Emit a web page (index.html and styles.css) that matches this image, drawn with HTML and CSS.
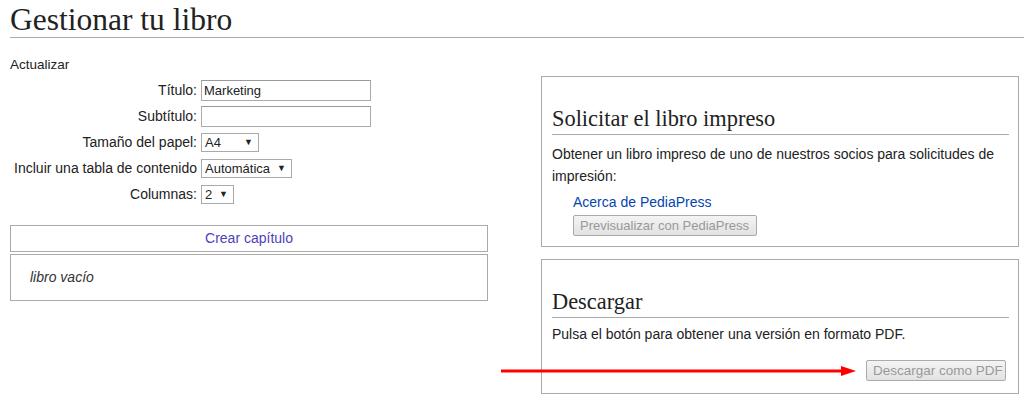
FILE: index.html
```html
<!DOCTYPE html>
<html lang="es">
<head>
<meta charset="utf-8">
<title>Gestionar tu libro</title>
<link rel="stylesheet" href="styles.css">
</head>
<body>
<div class="page">
  <h1 class="title">Gestionar tu libro</h1>
  <div class="cols">
    <div class="left">
      <div class="update">Actualizar</div>
      <table class="form">
        <tr><td class="lbl">Título:</td><td><input class="txt" type="text" value="Marketing"></td></tr>
        <tr><td class="lbl">Subtítulo:</td><td><input class="txt" type="text" value=""></td></tr>
        <tr><td class="lbl">Tamaño del papel:</td><td><span class="sel sel-a4">A4<span class="tri">▼</span></span></td></tr>
        <tr><td class="lbl">Incluir una tabla de contenido</td><td><span class="sel sel-auto">Automática<span class="tri">▼</span></span></td></tr>
        <tr><td class="lbl">Columnas:</td><td><span class="sel sel-col">2<span class="tri">▼</span></span></td></tr>
      </table>
      <div class="chapter"><a class="chap-link">Crear capítulo</a></div>
      <div class="empty"><i>libro vacío</i></div>
    </div>
    <div class="right">
      <div class="box box-print">
        <h2 class="sub">Solicitar el libro impreso</h2>
        <p class="txtp">Obtener un libro impreso de uno de nuestros socios para solicitudes de impresión:</p>
        <div class="pp">
          <a class="link">Acerca de PediaPress</a>
          <span class="btn">Previsualizar con PediaPress</span>
        </div>
      </div>
      <div class="box box-dl">
        <h2 class="sub">Descargar</h2>
        <p class="txtp">Pulsa el botón para obtener una versión en formato PDF.</p>
        <div class="dlrow"><span class="btn">Descargar como PDF</span></div>
      </div>
    </div>
  </div>
  <svg class="arrow" width="360" height="14" viewBox="0 0 360 14">
    <line x1="0" y1="7" x2="343" y2="7" stroke="#ff0000" stroke-width="3"/>
    <polygon points="340,2 355,7 340,12" fill="#ff0000"/>
  </svg>
</div>
</body>
</html>
```
FILE: styles.css
```css
html, body { margin: 0; padding: 0; background: #fff; }
body { font-family: "Liberation Sans", Arial, sans-serif; color: #222; font-size: 14px; }
.page { position: relative; width: 1024px; height: 405px; overflow: hidden; }
.title {
  font-family: "Liberation Serif", "DejaVu Serif", serif;
  font-weight: normal; font-size: 31.5px; line-height: 34px;
  margin: 0 0 0 10px; padding: 3px 0 0 0;
  border-bottom: 1px solid #aaa; height: 34px;
}
.cols { display: flex; padding-left: 10px; }
.left { width: 478px; }
.right { width: 478px; margin-left: 53px; padding-top: 38px; }
.update { margin-top: 19px; line-height: 16px; font-size: 13.5px; }
.form { border-collapse: collapse; margin-top: 4px; }
.form td { padding: 0; height: 26px; vertical-align: middle; }
.lbl { text-align: right; width: 187px; padding-right: 4px !important; white-space: nowrap; }
.txt {
  box-sizing: border-box; width: 170px; height: 21px; margin: 0; padding: 1px 2px;
  border: 1px solid #aaa; font: 13px "Liberation Sans", Arial, sans-serif; color: #222;
  border-top-color: #999;
}
.sel {
  display: inline-flex; align-items: center; justify-content: space-between; box-sizing: border-box;
  height: 19px; border: 1px solid #aaa; padding: 0 5px 0 3px; font-size: 13px; background: #fff;
}
.tri { font-size: 9px; }
.sel-a4 { width: 58px; }
.sel-auto { width: 91px; }
.sel-col { width: 33px; }
.chapter {
  margin-top: 18px; border: 1px solid #aaa; height: 25px; line-height: 25px;
  text-align: center; font-size: 14px;
}
.chap-link { color: #4b43b8; }
.empty { margin-top: 2px; border: 1px solid #aaa; height: 47px; box-sizing: border-box; padding: 14px 0 0 19px; font-size: 14px; }
.empty i { color: #333; }
.box { border: 1px solid #aaa; box-sizing: border-box; padding: 0 9px 0 10px; }
.box-print { height: 171px; padding-top: 28px; }
.box-dl { height: 135px; margin-top: 12px; padding-top: 28px; }
.sub {
  font-family: "Liberation Serif", "DejaVu Serif", serif; font-weight: normal;
  font-size: 22.4px; line-height: 28px; margin: 0; padding-bottom: 1px;
  border-bottom: 1px solid #aaa;
}
.txtp { margin: 5px 0 0 0; font-size: 14px; line-height: 22px; }
.box-print .txtp { margin-top: 8px; }
.pp { padding-left: 21px; margin-top: 6px; display: flex; flex-direction: column; align-items: flex-start; }
.link { color: #0645ad; font-size: 14px; line-height: 18px; }
.btn {
  display: inline-block; box-sizing: border-box; border: 1px solid #aaa; border-radius: 2px;
  background: linear-gradient(#f4f4f4, #e2e2e2); color: #999; font-size: 13px;
  height: 21px; line-height: 19px; padding: 0 6px; white-space: nowrap;
}
.box-print .btn { margin-top: 4px; width: 184px; }
.dlrow { display: flex; justify-content: flex-end; margin-top: 15px; padding-right: 3px; }
.box-dl .btn { width: 140px; text-align: center; font-size: 13.5px; }
.arrow { position: absolute; left: 501px; top: 364px; }
```
